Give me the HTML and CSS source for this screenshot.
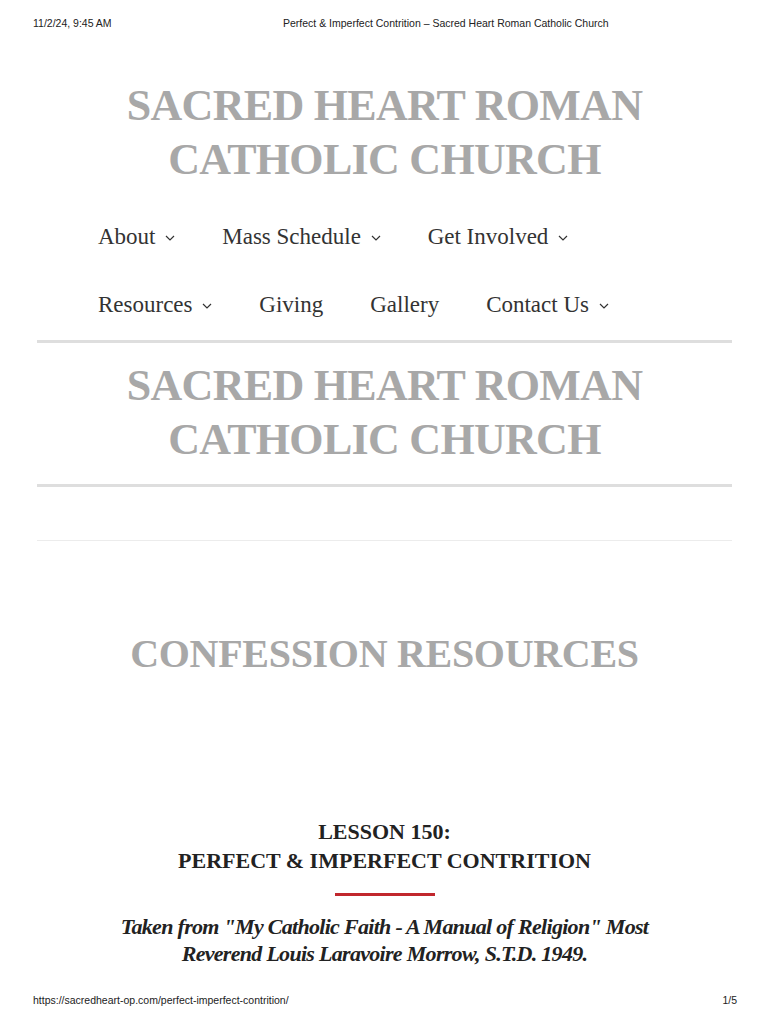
FILE: index.html
```html
<!DOCTYPE html>
<html lang="en">
<head>
<meta charset="utf-8">
<title>Perfect &amp; Imperfect Contrition – Sacred Heart Roman Catholic Church</title>
<link rel="stylesheet" href="styles.css">
</head>
<body>
<div class="print-head">
  <span class="ph-date">11/2/24, 9:45 AM</span>
  <span class="ph-title">Perfect &amp; Imperfect Contrition – Sacred Heart Roman Catholic Church</span>
</div>
<div class="page">
  <header class="site-header">
    <h1 class="site-title">SACRED HEART ROMAN<br>CATHOLIC CHURCH</h1>
    <nav class="main-nav">
      <ul class="menu">
        <li class="item has-sub">About <span class="chev"><svg viewBox="0 0 10 6" width="10" height="6"><path d="M1 1l4 4 4-4" fill="none" stroke="#333" stroke-width="1.2"/></svg></span></li>
        <li class="item has-sub">Mass Schedule <span class="chev"><svg viewBox="0 0 10 6" width="10" height="6"><path d="M1 1l4 4 4-4" fill="none" stroke="#333" stroke-width="1.2"/></svg></span></li>
        <li class="item has-sub">Get Involved <span class="chev"><svg viewBox="0 0 10 6" width="10" height="6"><path d="M1 1l4 4 4-4" fill="none" stroke="#333" stroke-width="1.2"/></svg></span></li>
        <li class="break" aria-hidden="true"></li>
        <li class="item has-sub">Resources <span class="chev"><svg viewBox="0 0 10 6" width="10" height="6"><path d="M1 1l4 4 4-4" fill="none" stroke="#333" stroke-width="1.2"/></svg></span></li>
        <li class="item">Giving</li>
        <li class="item">Gallery</li>
        <li class="item has-sub">Contact Us <span class="chev"><svg viewBox="0 0 10 6" width="10" height="6"><path d="M1 1l4 4 4-4" fill="none" stroke="#333" stroke-width="1.2"/></svg></span></li>
      </ul>
    </nav>
  </header>
  <div class="rule thick"></div>
  <div class="brand-band">
    <p class="brand-title">SACRED HEART ROMAN<br>CATHOLIC CHURCH</p>
  </div>
  <div class="rule thick"></div>
  <div class="spacer"></div>
  <div class="rule thin"></div>
  <section class="page-title">
    <h2>CONFESSION RESOURCES</h2>
  </section>
  <section class="lesson">
    <h3>LESSON 150:<br>PERFECT &amp; IMPERFECT CONTRITION</h3>
    <div class="red-line"></div>
    <p class="source">Taken from "My Catholic Faith - A Manual of Religion" Most<br>Reverend Louis Laravoire Morrow, S.T.D. 1949.</p>
  </section>
</div>
<div class="print-foot">
  <span>https://sacredheart-op.com/perfect-imperfect-contrition/</span>
  <span>1/5</span>
</div>
</body>
</html>
```

FILE: styles.css
```css
html, body {
  margin: 0;
  padding: 0;
  background: #fff;
}
body {
  width: 768px;
  height: 1024px;
  position: relative;
  overflow: hidden;
  font-family: "Liberation Serif", "DejaVu Serif", serif;
  color: #333;
}
.print-head {
  height: 46px;
  display: flex;
  align-items: center;
  padding: 0 33px;
  font-family: "Liberation Sans", Arial, sans-serif;
  font-size: 10.5px;
  color: #222;
}
.ph-date { width: 250px; }
.ph-title { flex: 1; }
.print-foot {
  position: absolute;
  left: 0;
  right: 0;
  top: 990px;
  height: 20px;
  display: flex;
  justify-content: space-between;
  align-items: center;
  padding: 0 31px 0 33px;
  font-family: "Liberation Sans", Arial, sans-serif;
  font-size: 10.5px;
  color: #222;
}
.page {
  width: 695px;
  margin: 0 auto 0 37px;
}
.site-title, .brand-title, .page-title h2 {
  font-family: "Liberation Serif", "DejaVu Serif", serif;
  font-weight: bold;
  color: #a8a8a8;
  text-align: center;
  margin: 0;
}
.site-title {
  font-size: 44px;
  line-height: 54px;
  padding-top: 33px;
  letter-spacing: -0.7px;
}
.main-nav {
  padding: 33px 0 0 61px;
}
.menu {
  list-style: none;
  margin: 0;
  padding: 0;
  display: flex;
  flex-wrap: wrap;
  column-gap: 47px;
}
.menu .break {
  flex-basis: 100%;
  height: 0;
}
.item {
  font-size: 23px;
  line-height: 34px;
  height: 34px;
  padding: 0;
  color: #333;
  display: flex;
  align-items: center;
  white-space: pre;
}
.item:nth-child(n+5) {
  margin-top: 34px;
}
.chev {
  display: inline-flex;
  margin-left: 4px;
  margin-top: 2px;
}
.rule {
  background: #dedede;
}
.rule.thick {
  height: 3px;
}
.site-header + .rule {
  margin-top: 18px;
}
.brand-band {
  padding: 16px 0 17px;
}
.brand-title {
  font-size: 44px;
  line-height: 54px;
  letter-spacing: -0.7px;
}
.spacer {
  height: 53px;
}
.rule.thin {
  height: 1px;
  background: #ececec;
}
.page-title {
  padding-top: 88px;
}
.page-title h2 {
  font-size: 40px;
  line-height: 50px;
  letter-spacing: -0.3px;
}
.lesson {
  padding-top: 138px;
  text-align: center;
}
.lesson h3 {
  margin: 0;
  font-size: 22px;
  line-height: 29px;
  font-weight: bold;
  color: #222;
}
.red-line {
  width: 100px;
  height: 3px;
  background: #c1272d;
  margin: 18px auto 17px;
}
.source {
  margin: 0;
  font-style: italic;
  font-weight: bold;
  font-size: 22px;
  line-height: 27px;
  letter-spacing: -0.7px;
  color: #222;
}
```
